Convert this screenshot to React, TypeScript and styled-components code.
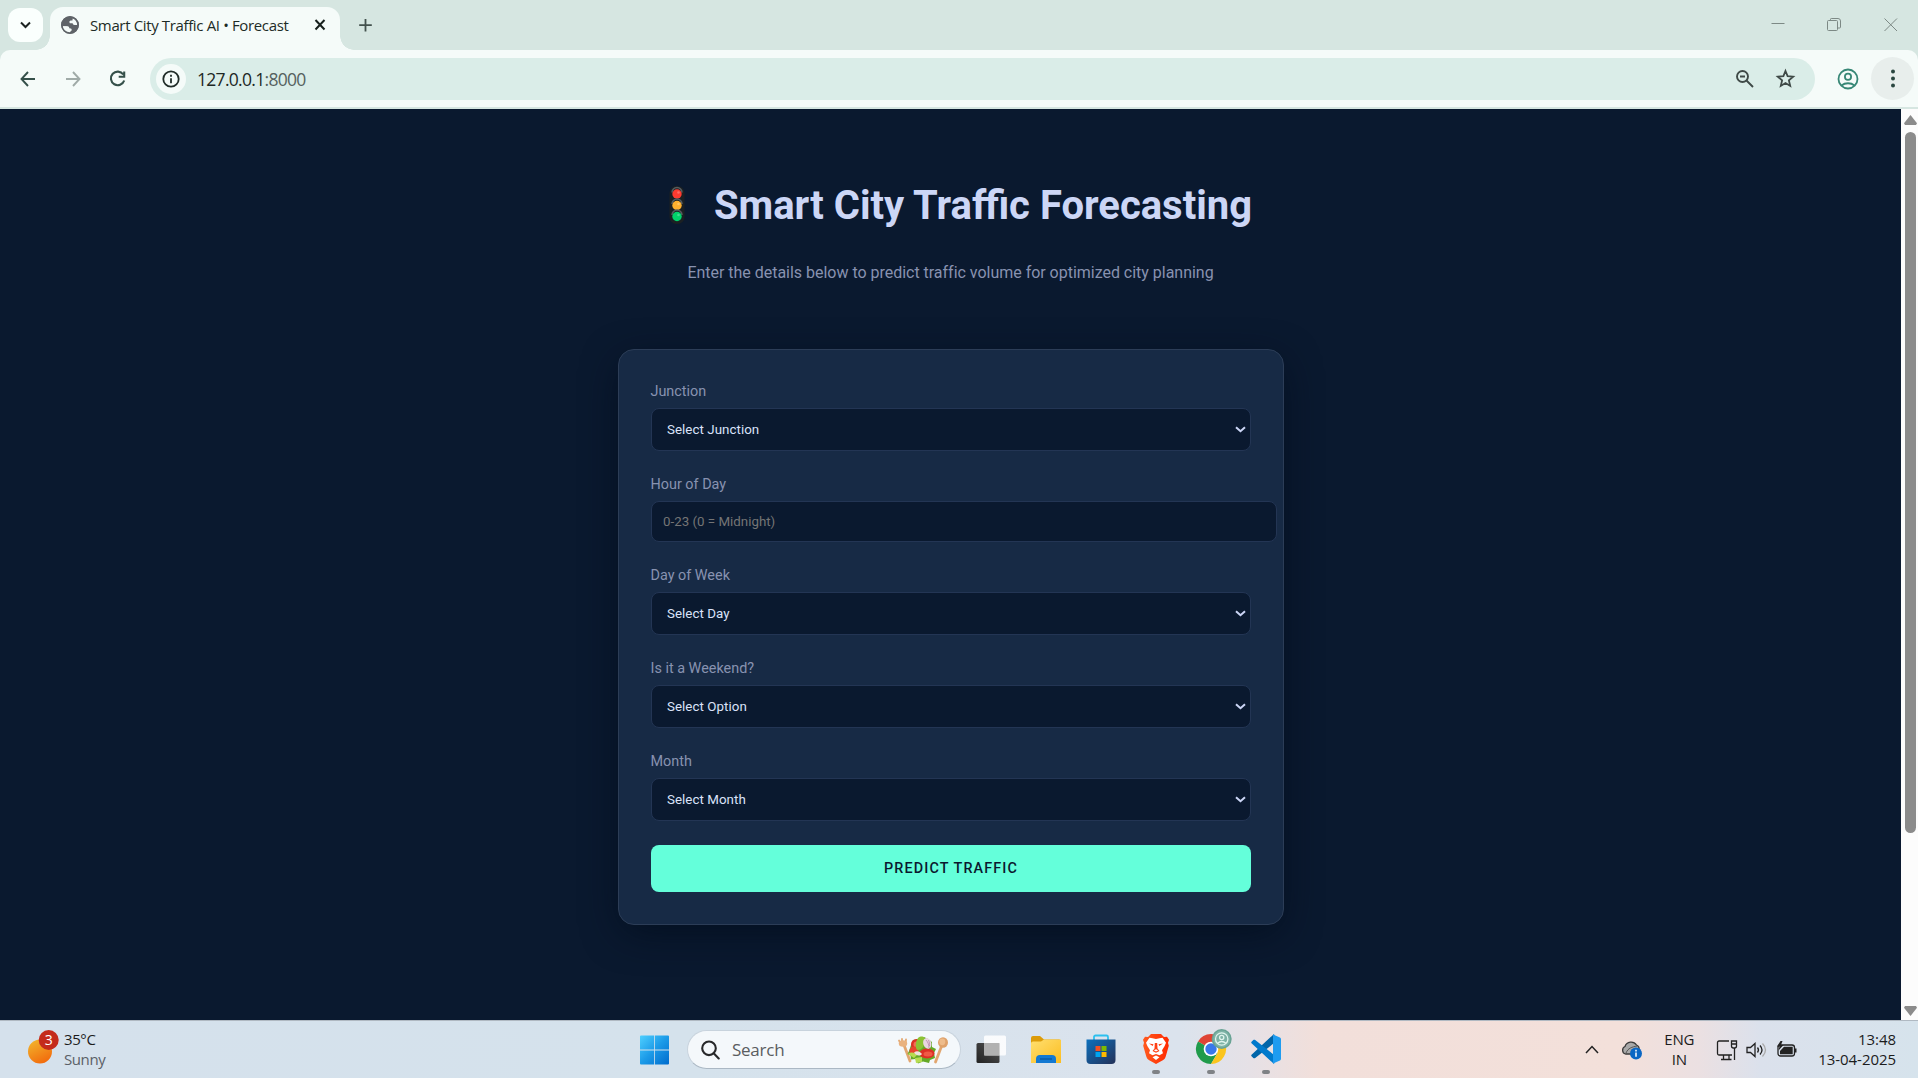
import React from "react";
import styled, { createGlobalStyle, css } from "styled-components";

const Global = createGlobalStyle`
  * { box-sizing: border-box; }
  html, body { margin: 0; padding: 0; overflow: hidden; }
  body { font-family: Roboto, "Open Sans", sans-serif; background: #0a192f; }
  button, input { font-family: inherit; margin: 0; }
`;

const ui = `"Open Sans", "Noto Sans", sans-serif`;

const Screen = styled.div`
  width: 1918px;
  height: 1078px;
  display: flex;
  flex-direction: column;
  overflow: hidden;
`;

/* ---------- browser chrome ---------- */
const TabStrip = styled.header`
  height: 50px;
  flex: none;
  background: #d6e6e1;
  display: flex;
  align-items: flex-start;
  padding-left: 8px;
  font-family: ${ui};
`;

const TabSearch = styled.button`
  width: 35px;
  height: 34px;
  margin: 8px 7px 0 0;
  padding: 0;
  border: 0;
  border-radius: 12px;
  background: #fafffd;
  display: grid;
  place-items: center;
`;

const flare = css`
  content: "";
  position: absolute;
  bottom: 0;
  width: 14px;
  height: 14px;
`;

const Tab = styled.div`
  position: relative;
  width: 290px;
  height: 43px;
  margin-top: 7px;
  padding: 0 13px 7px 11px;
  border-radius: 13px 13px 0 0;
  background: #f5fbf9;
  display: flex;
  align-items: center;
  &::before {
    ${flare}
    left: -14px;
    background: radial-gradient(circle at 0 0, transparent 13.5px, #f5fbf9 14px);
  }
  &::after {
    ${flare}
    right: -14px;
    background: radial-gradient(circle at 100% 0, transparent 13.5px, #f5fbf9 14px);
  }
`;

const TabTitle = styled.span`
  flex: 1;
  margin-left: 11px;
  font-size: 15px;
  letter-spacing: -0.36px;
  white-space: nowrap;
  color: #1d2b27;
`;

const NewTab = styled.div`
  margin: 17px 0 0 18px;
  display: flex;
`;

const WindowButtons = styled.div`
  margin: 16px 19px 0 auto;
  display: flex;
  align-items: center;
  gap: 42px;
`;

const ToolbarBack = styled.div`
  flex: none;
  background: #d6e6e1;
  height: 59px;
  padding-bottom: 2px;
`;

const Toolbar = styled.div`
  height: 57px;
  border-radius: 10px 10px 0 0;
  background: #f5fbf9;
  display: flex;
  align-items: center;
  padding: 0 4px 0 18px;
  font-family: ${ui};
`;

const NavIcons = styled.div`
  display: flex;
  gap: 25px;
  width: 132px;
  svg { display: block; }
`;

const Omnibox = styled.div`
  width: 1665px;
  height: 42px;
  border-radius: 21px;
  background: #daede8;
  display: flex;
  align-items: center;
  padding: 0 19px 0 6px;
`;

const SiteInfo = styled.span`
  width: 30px;
  height: 30px;
  border-radius: 50%;
  background: #f5fbf9;
  display: grid;
  place-items: center;
`;

const Address = styled.span`
  flex: 1;
  margin-left: 11px;
  font-size: 17.5px;
  letter-spacing: -0.7px;
  color: #1d2724;
  span { color: #55615e; }
`;

const OmniIcons = styled.div`
  display: flex;
  gap: 20px;
  align-items: center;
`;

const Profile = styled.span`
  width: 22px;
  margin: 0 auto 0 22px;
  display: flex;
`;

const MenuButton = styled.span`
  width: 43px;
  height: 43px;
  border-radius: 50%;
  background: #e8eeec;
  display: grid;
  place-items: center;
`;

/* ---------- web page ---------- */
const Viewport = styled.div`
  height: 911px;
  flex: none;
  display: flex;
`;

const Page = styled.main`
  flex: 1;
  background: #0a192f;
  display: flex;
  flex-direction: column;
  align-items: center;
`;

const Heading = styled.h1`
  margin: 73px 0 0;
  height: 48px;
  padding-left: 20px;
  display: flex;
  align-items: center;
  gap: 29px;
  font-size: 40px;
  line-height: 48px;
  font-weight: 700;
  color: #ccd6f6;
  white-space: nowrap;
  svg { margin-bottom: 2px; }
`;

const Subtitle = styled.p`
  margin: 31px 0 0;
  font-size: 16px;
  line-height: 24px;
  letter-spacing: -0.02px;
  color: #8892b0;
  white-space: nowrap;
`;

const Card = styled.form`
  width: 666px;
  height: 576px;
  margin: 64px 0 0 1px;
  padding: 32px;
  border: 1px solid #2c3d57;
  border-radius: 16px;
  background: #172a45;
  box-shadow: 0 10px 38px -4px rgba(2, 12, 27, 0.75);
`;

const Group = styled.div`
  margin-bottom: 24px;
`;

const Label = styled.label`
  display: block;
  height: 20px;
  margin: 0 0 6px -0.5px;
  font-size: 14.4px;
  line-height: 20px;
  color: #8892b0;
`;

const field = css`
  display: flex;
  align-items: center;
  border: 1px solid #233554;
  border-radius: 8px;
  background: #0a192f;
  font-size: 13.33px;
`;

const Select = styled.button`
  ${field}
  width: 600px;
  height: 43px;
  padding: 0 4px 0 15px;
  justify-content: space-between;
  font-weight: 400;
  letter-spacing: 0.05px;
  color: #dbe3fa;
`;

const Input = styled.input`
  ${field}
  width: 626px;
  height: 41px;
  padding: 0 12px 0 11px;
  color: #ccd6f6;
  &::placeholder { color: #757575; opacity: 1; }
`;

const Submit = styled.button`
  display: block;
  width: 600px;
  height: 47px;
  border: 0;
  border-radius: 8px;
  background: #64ffda;
  color: #0a192f;
  font-size: 14.4px;
  font-weight: 500;
  letter-spacing: 1.1px;
  text-transform: uppercase;
`;

const ScrollTrack = styled.aside`
  width: 17px;
  background: #fcfcfc;
  display: flex;
  flex-direction: column;
  align-items: center;
  padding: 6px 0 4px 2px;
`;

const ScrollThumb = styled.div`
  width: 11px;
  height: 701px;
  margin: 7px 0 auto;
  border-radius: 6px;
  background: #8b8b8b;
`;

/* ---------- taskbar ---------- */
const Taskbar = styled.footer`
  height: 58px;
  flex: none;
  border-top: 1px solid #b0b9c2;
  background: linear-gradient(90deg, #d5e1ec 0, #d5e2ec 700px, #dbe3ed 1180px, #e6e1e6 1250px, #f2dfda 1320px, #f3e0da 1620px, #ebe0e2 1700px, #dbe1ec 1760px, #d6e3ec 1918px);
  display: grid;
  grid-template-columns: 640px 1fr auto;
  align-items: center;
  font-family: ${ui};
  color: #1c1c1c;
`;

const Weather = styled.div`
  display: flex;
  align-items: center;
  padding-left: 28px;
  gap: 5px;
  svg { margin-bottom: 3px; }
`;

const Lines = styled.div<{ $align?: string; $track?: number }>`
  margin-bottom: 1px;
  font-size: 15px;
  line-height: 20px;
  letter-spacing: ${(p) => p.$track ?? -0.2}px;
  text-align: ${(p) => p.$align ?? "left"};
  white-space: nowrap;
`;

const Muted = styled.div`
  color: #5b6067;
`;

const Apps = styled.div`
  display: flex;
  align-items: center;
`;

const SearchBox = styled.div`
  width: 274px;
  height: 39px;
  margin: 0 2px 0 17px;
  padding: 0 11px 0 13px;
  border: 1px solid #c8d3dd;
  border-bottom-color: #abb8c4;
  border-radius: 20px;
  background: #f4f8fb;
  display: flex;
  align-items: center;
  span {
    flex: 1;
    margin-left: 12px;
    font-size: 17px;
    letter-spacing: -0.25px;
    color: #5a5d60;
  }
`;

const AppCell = styled.div<{ $running?: boolean }>`
  width: 55px;
  height: 57px;
  padding-top: 8px;
  display: flex;
  flex-direction: column;
  align-items: center;
  &::after {
    content: "";
    width: 8px;
    height: 4px;
    margin-top: 3px;
    border-radius: 2px;
    background: ${(p) => (p.$running ? "#7f8286" : "transparent")};
  }
`;

const Tray = styled.div`
  display: flex;
  align-items: center;
  padding-right: 22px;
`;

const TrayItem = styled.div<{ $gap: number }>`
  margin-left: ${(p) => p.$gap}px;
  display: flex;
`;

const Chevron = () => (
  <svg width="11" height="7" viewBox="0 0 11 7" fill="none" stroke="#ccd6f6" strokeWidth="2">
    <path d="M1 1.2 5.5 5.2 10 1.2" />
  </svg>
);

const Globe = () => (
  <svg width="18" height="18" viewBox="0 0 18 18">
    <circle cx="9" cy="9" r="8.1" fill="#f5fbf9" stroke="#5f6368" strokeWidth="1.7" />
    <path d="M9 1C4.5 1 1 4.600 1 9l.3 1.300H6.700c1.200.3 1.600.8 1.600 2l1.500.3c.9.2 1 1 .8 1.900l-1.400 1.200-.3 1.300c4.300.2 8.100-3.300 8.100-8h-3.500c-1.200 0-1.800-.7-1.800-1.700H8.900L8.200 5.700l1.300-1.100 1.900-.2.5-2.700C11 1.200 10 1 9 1Z" fill="#5f6368" />
    <path d="M1.500 10.300 6 10.500l1.600 1.300v2.400l1.300 1.600v1.100C5 17 2 14.500 1.500 10.300Z" fill="#f5fbf9" />
    <circle cx="9" cy="9" r="8.1" fill="none" stroke="#5f6368" strokeWidth="1.500" />
  </svg>
);

const TrafficLight = () => (
  <svg width="16" height="38" viewBox="0 0 16 38">
    <rect x="0.500" y="0" width="15" height="38" rx="7" fill="#1b2023" />
    {[["#ff3b30", 8], ["#ffb02e", 19.500], ["#00d26a", 30.500]].map(([c, y]) => (
      <g key={c as string}>
        <path d={`M3 ${Number(y) - 1.500}a5 5 0 0 1 10 0`} fill="none" stroke="#555c60" strokeWidth="1.500" />
        <circle cx="8" cy={y} r="4.700" fill={c as string} />
        <circle cx="9.500" cy={Number(y) - 1.500} r="1.300" fill="#fff" opacity="0.25" />
      </g>
    ))}
  </svg>
);

const Salad = () => (
  <svg width="52" height="30" viewBox="0 0 52 30">
    <g fill="none" stroke="#e2a66f" strokeLinecap="round">
      <path d="M7 10 13 26" strokeWidth="2.800" />
      <path d="M45 10 38.500 27" strokeWidth="2.800" />
      <path d="M2 5.500 3.500 9M5 4v5M9 4.500 8.500 9" strokeWidth="1.800" />
    </g>
    <ellipse cx="6" cy="8.500" rx="4.200" ry="3.200" fill="#e9b27f" />
    <ellipse cx="46" cy="7.500" rx="5" ry="5.200" fill="#dfa26b" />
    <ellipse cx="45.300" cy="6.800" rx="3" ry="3.400" fill="#eebc8b" />
    <path d="m12 16-1.500 3 3 1.500.5 4 4.500-.5 2.500 4.500 5-2 6 1.500 1-3 5-2-1-5 2-4-4-2 0-5-4-3-4-2-5 2-6 1-2 5z" fill="#65a927" />
    <circle cx="19.500" cy="9.500" r="5.500" fill="#dd3026" />
    <circle cx="19.500" cy="9.500" r="3" fill="#f16f57" />
    <ellipse cx="30" cy="18.500" rx="7.500" ry="5" fill="#dd3026" />
    <ellipse cx="31" cy="19" rx="4.500" ry="2.500" fill="#f05a45" />
    <circle cx="17" cy="16" r="4.500" fill="#e8442f" />
    <path d="M21 3c4-3 8-1 7 4s-4 8-7 8-3-8 0-12Z" fill="#8cc233" />
    <ellipse cx="30.500" cy="8.500" rx="4" ry="5.500" fill="#e9d6e0" transform="rotate(-20 30 9)" />
    <path d="M29 5c2 2 3 5 3 8M31.500 5c1 2 1 4 1 6" stroke="#b885a8" strokeWidth="0.800" fill="none" />
    <path d="M11 19c4-3 7-1 9 1l-3 3zM18 23l7-1 0 5-6 1z" fill="#b6dc50" />
    <path d="M17 17.500c3-2.500 6-1 8 1.500-2 2.500-6 2-8-1.500Z" fill="#ece3dc" />
  </svg>
);

const WinLogo = () => (
  <svg width="30" height="30" viewBox="0 0 30 30">
    <defs>
      <linearGradient id="win" gradientUnits="userSpaceOnUse" x1="0" y1="0" x2="29" y2="29">
        <stop offset="0" stopColor="#4fd0ff" />
        <stop offset="0.500" stopColor="#1c9be8" />
        <stop offset="1" stopColor="#006ccd" />
      </linearGradient>
    </defs>
    <path fill="url(#win)" d="M1 .500h13.200v14H0v-13a1 1 0 0 1 1-1ZM15 .500h13a1 1 0 0 1 1 1v13H15ZM0 15.500h14.200v14H1a1 1 0 0 1-1-1ZM15 15.500h14v13a1 1 0 0 1-1 1H15Z" />
  </svg>
);

const TaskView = () => (
  <svg width="34" height="38" viewBox="0 0 34 38">
    <defs>
      <linearGradient id="tv" x1="1" y1="0" x2="0" y2="1">
        <stop offset="0" stopColor="#555" />
        <stop offset="1" stopColor="#222" />
      </linearGradient>
    </defs>
    <rect x="2.500" y="14" width="23" height="20" rx="1.500" fill="url(#tv)" />
    <rect x="10" y="6.500" width="22" height="20" rx="1.500" fill="#fff" opacity="0.85" />
    <path d="M10 14H25.500V26.500H10z" fill="#a8a8a8" opacity="0.85" />
  </svg>
);

const Folder = () => (
  <svg width="34" height="38" viewBox="0 0 34 38">
    <defs>
      <linearGradient id="fo" x1="0" y1="0" x2="1" y2="1">
        <stop offset="0" stopColor="#ffdf70" />
        <stop offset="1" stopColor="#fcbd20" />
      </linearGradient>
    </defs>
    <path d="M2 9a2 2 0 0 1 2-2h7l4 3.500h15a2 2 0 0 1 2 2V16H2z" fill="#dc9b09" />
    <path d="M2 14.500a2 2 0 0 1 2-2h8l3-2h16a1 1 0 0 1 1 1V34H2z" fill="url(#fo)" />
    <path d="M7 34v-4a4 4 0 0 1 4-4h12a4 4 0 0 1 4 4v4z" fill="#1379d2" />
    <path d="M11 30h12" stroke="#0a559d" strokeWidth="1.200" />
  </svg>
);

const Store = () => (
  <svg width="34" height="38" viewBox="0 0 34 38">
    <defs>
      <linearGradient id="st" x1="0" y1="0" x2="1" y2="1">
        <stop offset="0" stopColor="#0c70bd" />
        <stop offset="1" stopColor="#243158" />
      </linearGradient>
    </defs>
    <path d="M10 13V8a1.500 1.500 0 0 1 1.500-1.500h11A1.500 1.500 0 0 1 24 8v5" fill="none" stroke="#2cc0ef" strokeWidth="1.800" />
    <path d="M2.500 10.500h29V31a4 4 0 0 1-4 4h-21a4 4 0 0 1-4-4z" fill="url(#st)" />
    <path d="M11.500 17H16.500v5h-5z" fill="#f25022" />
    <path d="M17.500 17h5v5h-5z" fill="#7fba00" />
    <path d="M11.500 23H16.500v5h-5z" fill="#00a4ef" />
    <path d="M17.500 23h5v5h-5z" fill="#ffb900" />
  </svg>
);

const Brave = () => (
  <svg width="34" height="38" viewBox="0 0 34 38">
    <defs>
      <linearGradient id="br" x1="0" y1="0" x2="1" y2="0">
        <stop offset="0" stopColor="#ff5a1f" />
        <stop offset="1" stopColor="#ff2a00" />
      </linearGradient>
    </defs>
    <path d="M12 5h10l3 3 3-.2 2 3-1 3 .8 3-3 10.500c-.5 2-1.500 3-3 4L17 35l-6.800-3.700c-1.500-1-2.500-2-3-4L4.200 16.800 5 13.800l-1-3 2-3 3 .2z" fill="url(#br)" />
    <path d="M17 10l3.500-.8 3-.5 3.500 5-1.500 3.500-2.500 4 1 3-3.500 2L17 25l-3.500 1.200-3.500-2 1-3-2.500-4L7 13.700l3.500-5 3 .5zM17 26.500l3.500 1.800L17 31l-3.500-2.700z" fill="#fff" />
    <path d="M10 14.500l4.500.8-.8 1.700zM24 14.500l-4.500.8.8 1.700zM15.800 14h2.400l.3 5.500 2 2.500-3.500 1.800-3.500-1.800 2-2.500z" fill="#ff4014" />
    <path d="M14.800 21.300 17 20.300l2.200 1L17 22.600z" fill="#fff" />
  </svg>
);

const Chrome = () => (
  <svg width="46" height="38" viewBox="0 0 46 38">
    <path d="M23 20 10 12.500A15 15 0 0 1 36 12.500Z" fill="#df4435" />
    <path d="M23 20 10 12.500A15 15 0 0 0 23 35l6.500-11Z" fill="#209b4b" />
    <path d="M23 20 36 12.500A15 15 0 0 1 23 35l6.500-11Z" fill="#fbc51d" />
    <path d="M23 12.500H36L29 21z" fill="#df4435" />
    <circle cx="23" cy="20" r="7.300" fill="#fff" />
    <circle cx="23" cy="20" r="5.700" fill="#3978ea" />
    <circle cx="33.700" cy="10" r="10" fill="#69a394" />
    <circle cx="33.700" cy="10" r="8.500" fill="#7eb2a6" />
    <g fill="none" stroke="#e0f4ed" strokeWidth="1.300">
      <circle cx="33.700" cy="10" r="6.200" />
      <circle cx="33.700" cy="8.500" r="2.100" />
      <path d="M29.500 14.200c2.500-2 6-2 8.400 0" />
    </g>
  </svg>
);

const VsCode = () => (
  <svg width="34" height="38" viewBox="0 0 34 38">
    <path d="M25 5 2.800 25.500c-.8.700-.8 1.400 0 2.100l1.500 1.300c.6.500 1.300.5 1.900 0L27 12.500z" fill="#0065a9" />
    <path d="M25 35 2.800 14.500c-.8-.7-.8-1.400 0-2.100l1.500-1.300c.6-.5 1.300-.5 1.900 0L27 27.500z" fill="#007acc" />
    <path d="M24 5.400 31 8.600c.7.300 1 .9 1 1.600v19.600c0 .7-.3 1.300-1 1.600l-7 3.200z" fill="#1f9cf0" />
  </svg>
);

const fields = [
  { label: "Junction", text: "Select Junction" },
  { label: "Hour of Day", text: "0-23 (0 = Midnight)", input: true },
  { label: "Day of Week", text: "Select Day" },
  { label: "Is it a Weekend?", text: "Select Option" },
  { label: "Month", text: "Select Month" },
];

export default function App() {
  return (
    <Screen>
      <Global />
      <TabStrip>
        <TabSearch type="button" aria-label="Search tabs">
          <svg width="11" height="8" viewBox="0 0 11 8" fill="none" stroke="#1c2321" strokeWidth="2">
            <path d="M1 1.500 5.500 6 10 1.500" />
          </svg>
        </TabSearch>
        <Tab>
          <Globe />
          <TabTitle>Smart City Traffic AI • Forecast</TabTitle>
          <svg width="14" height="14" viewBox="0 0 14 14" stroke="#17201d" strokeWidth="2">
            <path d="m2.500 2 9 9.500m0-9.500-9 9.500" />
          </svg>
        </Tab>
        <NewTab>
          <svg width="14" height="16" viewBox="0 0 14 16" stroke="#43514d" strokeWidth="1.800">
            <path d="M7.500 2v12.500M1.200 8.200h12.600" />
          </svg>
        </NewTab>
        <WindowButtons>
          <svg width="14" height="16" viewBox="0 0 14 16" stroke="#7d8985"><path d="M.5 7.500h13" /></svg>
          <svg width="14" height="16" viewBox="0 0 14 16" fill="none" stroke="#7d8985">
            <rect x="0.500" y="4.500" width="10" height="10" rx="1" />
            <path d="M3.500 4.500V3.300q0-.8.8-.8H11q2.500 0 2.500 2.500v6q0 1-1 1h-2" />
          </svg>
          <svg width="16" height="16" viewBox="0 0 16 16" stroke="#7d8985"><path d="m1.500 2.500 12.500 12.500M14 2.500 1.500 15" /></svg>
        </WindowButtons>
      </TabStrip>
      <ToolbarBack>
        <Toolbar>
          <NavIcons>
            {["#35504a", "#a0aba8"].map((c, i) => (
              <svg key={c} width="20" height="20" viewBox="0 0 20 20" fill="none" stroke={c} strokeWidth="1.900" transform={i ? "scale(-1 1)" : undefined}>
                <path d="M17 10H4M10 3 3.500 10 10 17" />
              </svg>
            ))}
            <svg width="20" height="20" viewBox="0 0 20 20" fill="none" stroke="#35504a" strokeWidth="2.100">
              <path d="M15.300 5.500A6.800 6.800 0 1 0 16.200 11.500M16.200 2.500v5.300h-5.500" />
            </svg>
          </NavIcons>
          <Omnibox>
            <SiteInfo>
              <svg width="18" height="18" viewBox="0 0 18 18" fill="none" stroke="#202c28" strokeWidth="1.800">
                <circle cx="9" cy="9" r="7.700" />
                <path d="M9 8.200v5M9 4.800v1.900" />
              </svg>
            </SiteInfo>
            <Address>127.0.0.1<span>:8000</span></Address>
            <OmniIcons>
              <svg width="20" height="20" viewBox="0 0 20 20" fill="none" stroke="#3f4a47" strokeWidth="1.900">
                <circle cx="7.500" cy="7.500" r="5.500" />
                <path d="m11.500 11.500 6.500 6.500M5 7.500h5" />
              </svg>
              <svg width="21" height="21" viewBox="0 0 21 21" fill="none" stroke="#3f4a47" strokeWidth="1.800">
                <path d="m10.500 3 2.100 5.200 5.600.5-4.300 3.700 1.300 5.500-4.700-2.900-4.700 2.900 1.300-5.500L2.800 8.700l5.600-.5z" />
              </svg>
            </OmniIcons>
          </Omnibox>
          <Profile>
            <svg width="22" height="22" viewBox="0 0 22 22" fill="none" stroke="#378776" strokeWidth="1.800">
              <circle cx="11" cy="11" r="9.500" />
              <circle cx="11" cy="8.800" r="3.100" />
              <path d="M4.500 17.500c3.700-3 9.300-3 13 0" />
            </svg>
          </Profile>
          <MenuButton>
            <svg width="6" height="20" viewBox="0 0 6 20" fill="#2b4740">
              <circle cx="3" cy="2.500" r="2" />
              <circle cx="3" cy="9.500" r="2" />
              <circle cx="3" cy="16.500" r="2" />
            </svg>
          </MenuButton>
        </Toolbar>
      </ToolbarBack>

      <Viewport>
        <Page>
          <Heading><TrafficLight />Smart City Traffic Forecasting</Heading>
          <Subtitle>Enter the details below to predict traffic volume for optimized city planning</Subtitle>
          <Card>
            {fields.map((f) => (
              <Group key={f.label}>
                <Label>{f.label}</Label>
                {f.input ? <Input placeholder={f.text} /> : <Select type="button">{f.text}<Chevron /></Select>}
              </Group>
            ))}
            <Submit type="button">Predict Traffic</Submit>
          </Card>
        </Page>
        <ScrollTrack>
          <svg width="13" height="10" viewBox="0 0 13 10" fill="#8b8b8b"><path d="M6.500 0 13 8.200 12 10H1L0 8.200z" /></svg>
          <ScrollThumb />
          <svg width="13" height="10" viewBox="0 0 13 10" fill="#8b8b8b"><path d="M6.500 10 13 1.800 12 0H1L0 1.800z" /></svg>
        </ScrollTrack>
      </Viewport>

      <Taskbar>
        <Weather>
          <svg width="31" height="36" viewBox="0 0 31 36">
            <defs>
              <linearGradient id="sun" x1="0.200" y1="0" x2="0.700" y2="1">
                <stop offset="0" stopColor="#f2b42c" />
                <stop offset="1" stopColor="#f2690c" />
              </linearGradient>
            </defs>
            <circle cx="12" cy="21.500" r="12" fill="url(#sun)" />
            <circle cx="20.700" cy="10" r="10" fill="#c42b1c" />
            <text x="20.700" y="15" textAnchor="middle" fontSize="14" fontFamily="Open Sans, sans-serif" fill="#fff">3</text>
          </svg>
          <Lines $track={-0.4}>35°C<Muted>Sunny</Muted></Lines>
        </Weather>
        <Apps>
          <WinLogo />
          <SearchBox>
            <svg width="19" height="20" viewBox="0 0 19 20" fill="none" stroke="#27282a" strokeWidth="2.100">
              <circle cx="8" cy="8.300" r="6.800" />
              <path d="m12.700 13.300 5 5.200" strokeLinecap="round" />
            </svg>
            <span>Search</span>
            <Salad />
          </SearchBox>
          <AppCell><TaskView /></AppCell>
          <AppCell><Folder /></AppCell>
          <AppCell><Store /></AppCell>
          <AppCell $running><Brave /></AppCell>
          <AppCell $running><Chrome /></AppCell>
          <AppCell $running><VsCode /></AppCell>
        </Apps>
        <Tray>
          <TrayItem $gap={0}>
            <svg width="14" height="9" viewBox="0 0 14 9" fill="none" stroke="#222" strokeWidth="1.500"><path d="M1 8 7 1.500 13 8" /></svg>
          </TrayItem>
          <TrayItem $gap={22}>
            <svg width="21" height="20" viewBox="0 0 21 20">
              <path d="M4.500 14A4 4 0 0 1 4 6.500 6.500 6.500 0 0 1 15.500 5 4.500 4.500 0 0 1 18 10v4z" fill="#a9a9a9" stroke="#3b3b3b" strokeWidth="1.300" />
              <path d="M5 13c2-5 6-6 11-7" stroke="#555" fill="none" />
              <circle cx="15" cy="13.500" r="6" fill="#0a66c4" />
              <path d="M15 12.500v4.200M15 9.800v1.600" stroke="#fff" strokeWidth="1.500" />
            </svg>
          </TrayItem>
          <TrayItem $gap={22}><Lines $align="center">ENG<br />IN</Lines></TrayItem>
          <TrayItem $gap={22}>
            <svg width="22" height="22" viewBox="0 0 22 22" fill="none" stroke="#222" strokeWidth="1.300">
              <path d="M13 2H3a1.500 1.500 0 0 0-1.500 1.500v11A1.500 1.500 0 0 0 3 16h13M7.500 16v4.500M13 16v4.500M5 20.500h10.500M18.500 9v12" />
              <path d="M15.500 2h5v5a2 2 0 0 1-2 2h-1a2 2 0 0 1-2-2zM15.500 5h5" />
            </svg>
          </TrayItem>
          <TrayItem $gap={8}>
            <svg width="22" height="18" viewBox="0 0 22 18" fill="none" stroke="#222" strokeWidth="1.300">
              <path d="M1 6.500h3.500L9 2.500v13l-4.500-4H1z" />
              <path d="M11.500 6.500q2 2.500 0 5M14 4.500q4 4.500 0 9" />
              <path d="M16.500 2.500q6 6.500 0 13" stroke="#aaa" />
            </svg>
          </TrayItem>
          <TrayItem $gap={8}>
            <svg width="22" height="18" viewBox="0 0 22 18">
              <rect x="2" y="4" width="16.500" height="11" rx="2.500" fill="none" stroke="#222" strokeWidth="1.300" />
              <path d="M4 13.200V10L8 5.800h8.700v7.400zM19 7.500h1.500v4H19zM4.500 0 1 5.500h2.500L2.500 9.500 7.500 4H5L6.500 0z" fill="#222" />
            </svg>
          </TrayItem>
          <TrayItem $gap={20}><Lines $align="right" $track={-0.05}>13:48<br />13-04-2025</Lines></TrayItem>
        </Tray>
      </Taskbar>
    </Screen>
  );
}
